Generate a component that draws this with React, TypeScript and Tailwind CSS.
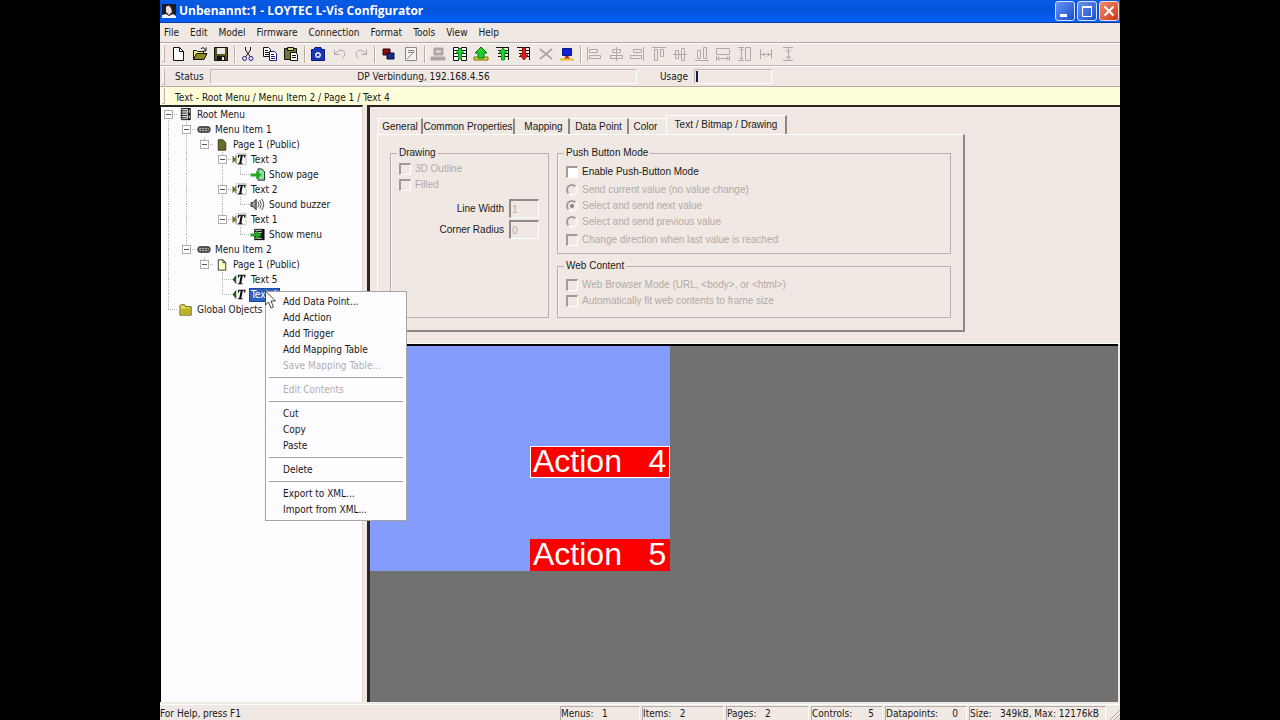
import type { ReactNode } from 'react';
import { clsx } from 'clsx';

type TGuide = 'line' | 'tee' | 'elbow' | 'blank' | 'boxRoot' | 'boxTee' | 'boxElbow';
type TIconName = 'root' | 'menu' | 'pageDark' | 'page' | 'text' | 'textIn' | 'goPage' | 'buzzer' | 'goMenu' | 'folder';
type TTreeRow = { label: string; icon: TIconName; guides: TGuide[]; selected?: boolean };

const treeRows: TTreeRow[] = [
  { label: 'Root Menu', icon: 'root', guides: ['boxRoot'] },
  { label: 'Menu Item 1', icon: 'menu', guides: ['line', 'boxTee'] },
  { label: 'Page 1 (Public)', icon: 'pageDark', guides: ['line', 'line', 'boxElbow'] },
  { label: 'Text 3', icon: 'text', guides: ['line', 'line', 'blank', 'boxTee'] },
  { label: 'Show page', icon: 'goPage', guides: ['line', 'line', 'blank', 'line', 'elbow'] },
  { label: 'Text 2', icon: 'text', guides: ['line', 'line', 'blank', 'boxTee'] },
  { label: 'Sound buzzer', icon: 'buzzer', guides: ['line', 'line', 'blank', 'line', 'elbow'] },
  { label: 'Text 1', icon: 'text', guides: ['line', 'line', 'blank', 'boxElbow'] },
  { label: 'Show menu', icon: 'goMenu', guides: ['line', 'line', 'blank', 'blank', 'elbow'] },
  { label: 'Menu Item 2', icon: 'menu', guides: ['line', 'boxElbow'] },
  { label: 'Page 1 (Public)', icon: 'page', guides: ['line', 'blank', 'boxElbow'] },
  { label: 'Text 5', icon: 'textIn', guides: ['line', 'blank', 'blank', 'tee'] },
  { label: 'Text 4', icon: 'textIn', guides: ['line', 'blank', 'blank', 'elbow'], selected: true },
  { label: 'Global Objects', icon: 'folder', guides: ['elbow'] },
];

const menuItems = ['File', 'Edit', 'Model', 'Firmware', 'Connection', 'Format', 'Tools', 'View', 'Help'];

const contextGroups = [
  [{ label: 'Add Data Point...' }, { label: 'Add Action' }, { label: 'Add Trigger' }, { label: 'Add Mapping Table' }, { label: 'Save Mapping Table...', disabled: true }],
  [{ label: 'Edit Contents', disabled: true }],
  [{ label: 'Cut' }, { label: 'Copy' }, { label: 'Paste' }],
  [{ label: 'Delete' }],
  [{ label: 'Export to XML...' }, { label: 'Import from XML...' }],
];

const Guide = ({ type }: { type: TGuide }) => {
  const up = type !== 'blank' && type !== 'boxRoot';
  const down = type === 'line' || type === 'tee' || type === 'boxTee' || type === 'boxRoot';
  const right = type !== 'blank' && type !== 'line';
  const box = type.startsWith('box');
  return (
    <svg className="h-[15px] w-[18px] shrink-0" viewBox="0 0 18 15" shapeRendering="crispEdges" fill="none" stroke="#b5b2b2" strokeDasharray="1 1">
      {up && <path d="M8.5 0V7" />}
      {down && <path d="M8.5 7V15" />}
      {right && <path d="M8 7.5H18" />}
      {box && (
        <g strokeDasharray="none">
          <rect x="4.5" y="3.5" width="8" height="8" fill="#fff" stroke="#b0adab" />
          <path d="M6 7.5h5" stroke="#555" />
        </g>
      )}
    </svg>
  );
};

const treeIcons: Record<TIconName, ReactNode> = {
  root: (
    <>
      <path d="M3 1h10v13H3z" fill="#111" />
      <path d="M4 2h6v11H4z" fill="#ddd" />
      <path d="M2 4h7M2 6.500h7M2 9h7M2 11.500h7" stroke="#222" />
      <path d="M11 3h1v3h-1zM11 9h1v3h-1z" fill="#eee" />
    </>
  ),
  menu: (
    <>
      <rect x="1.500" y="5" width="13" height="6" rx="2" fill="#555" stroke="#333" />
      <path d="M3 7h10M3 9h10" stroke="#ccc" strokeDasharray="2 1" />
    </>
  ),
  pageDark: <path d="M4 3h5l3 3v8H4z" fill="#6b6a2c" stroke="#33330c" />,
  page: (
    <>
      <path d="M4 3h5l3 3v8H4z" fill="#fdfcc4" stroke="#333" />
      <path d="M9 3v3h3" fill="none" stroke="#333" />
    </>
  ),
  text: (
    <>
      <path d="M4.500 1.500h10v12h-10z" fill="#fff" stroke="#c8c8c8" />
      <path d="M0 4l4 4-4 4z" fill="#6d6a1e" />
      <path d="M3.500 4v8" stroke="#6d6a1e" />
      <path d="M6 3h8l-.5 3h-1l-.2-2h-1.300l-1.600 8h1.300v1H5.800v-1h1.300l1.600-8H7.500L6.600 6h-1z" fill="#111" />
    </>
  ),
  textIn: (
    <>
      <path d="M4 3v10L0 8z" fill="#1d5a1d" />
      <path d="M6 3h8l-.5 3h-1l-.2-2h-1.300l-1.600 8h1.300v1H5.800v-1h1.300l1.600-8H7.500L6.600 6h-1z" fill="#111" />
    </>
  ),
  goPage: (
    <>
      <path d="M8 2h4l3 3v9H8z" fill="#8de08d" stroke="#123" />
      <path d="M0 7h6V4l6 4.500L6 13v-3H0z" fill="#25a825" />
    </>
  ),
  buzzer: (
    <>
      <path d="M.5 6h2L6 2.500v11L2.500 10h-2z" fill="#999" stroke="#222" />
      <path d="M8 5q2 3 0 6M10 3.500q3 4.500 0 9M12 2q4 6 0 12" fill="none" stroke="#444" />
    </>
  ),
  goMenu: (
    <>
      <path d="M4 2h11v12H4z" fill="#111" />
      <path d="M5 3.500h7M5 6h7M5 12h7" stroke="#eee" />
      <path d="M0 7h6V4l6 4.500L6 13v-3H0z" fill="#25a825" />
    </>
  ),
  folder: (
    <>
      <path d="M1.500 4l1-1h4l1 2h6v9h-12z" fill="#e8e04a" stroke="#55551a" />
      <path d="M3 7h10v6H3z" fill="#b8b02a" />
    </>
  ),
};

const Tool = ({ label, disabled, children }: { label: string; disabled?: boolean; children: ReactNode }) => (
  <button type="button" aria-label={label} disabled={disabled} className="h-4 w-4">
    <svg className="h-4 w-4" viewBox="0 0 16 16" fill="none" stroke={disabled ? '#b0a9a6' : '#111'}>
      {children}
    </svg>
  </button>
);

const Separator = () => <div className="mr-1 ml-[5px] h-[17px] w-[2px] shrink-0 border-r border-l border-r-white border-l-[#b5aca8]" />;

const Grip = () => <div className="h-4 w-[3px] shrink-0 border-r border-b border-[#bdb4b0] bg-[#f8f4f1]" />;

const LeftPage = () => (
  <>
    <path d="M1.500 1.500h5v13h-5z" fill="#fff" />
    <path d="M9.500 1.500h5v13h-5z" fill="#fff" />
    <path d="M2 4.500h4M2 7.500h4M2 10.500h4M10 4.500h4M10 7.500h4M10 10.500h4" />
  </>
);

const Toolbar = () => (
  <div className="flex h-[23px] items-center border-b border-[#c0b7b3] pl-[2px] shadow-[inset_0_1px_0_#ffffff]">
    <Grip />
    <div className="ml-[5px] flex w-[59px] justify-between">
      <Tool label="New">
        <path d="M3.500 1.500h6l4 4v9h-10z" fill="#fff" />
        <path d="M9.500 1.500v4h4" />
      </Tool>
      <Tool label="Open">
        <path d="M1.500 13.500v-9h3l1 1h6v2" fill="#f3ee7c" />
        <path d="M1.500 13.500l3-6h10.500l-3 6z" fill="#8c8820" />
        <path d="M9 3q2-3 4.500 1M14 1.500V5h-3" />
      </Tool>
      <Tool label="Save">
        <path d="M1.500 1.500h13v13h-13z" fill="#55551c" />
        <path d="M4 2h8v6H4z" fill="#e8e8e8" stroke="none" />
        <path d="M4 10h8v4H4z" fill="#111" stroke="none" />
        <path d="M9 11h2v3H9z" fill="#eee" stroke="none" />
      </Tool>
    </div>
    <Separator />
    <div className="flex w-[59px] justify-between">
      <Tool label="Cut">
        <path d="M5.500 1v3l5 7M10.500 1v3l-5 7" />
        <circle cx="4.500" cy="12.500" r="2" stroke="#1c1c86" />
        <circle cx="11" cy="12.500" r="2" stroke="#1c1c86" />
      </Tool>
      <Tool label="Copy">
        <path d="M1.500 1.500h5l2 2v7h-7z" fill="#fff" />
        <path d="M3 4.500h3M3 6.500h4M3 8.500h4" />
        <path d="M7.500 5.500h5l2 2v7h-7z" fill="#fff" stroke="#1c1c86" />
        <path d="M9 8.500h3M9 10.500h4M9 12.500h4" stroke="#1c1c86" />
      </Tool>
      <Tool label="Paste">
        <path d="M1.500 2.500h12v11h-12z" fill="#77743a" />
        <path d="M4.500 1.500h6v3h-6z" fill="#d6d080" />
        <path d="M7.500 6.500h5l2 2v6h-7z" fill="#fff" />
        <path d="M9 9.500h4M9 11.500h4" />
      </Tool>
    </div>
    <Separator />
    <div className="flex w-[59px] justify-between">
      <Tool label="Snapshot">
        <path d="M5 1.500h6l1 2h2.500v11h-13v-11H4z" fill="#1636c8" stroke="#0a1a7c" />
        <circle cx="8" cy="9" r="3.500" fill="#fff" stroke="#0a1a7c" />
        <circle cx="8" cy="9" r="1.500" fill="#1636c8" stroke="none" />
      </Tool>
      <Tool label="Undo" disabled>
        <path d="M2.500 3.500v5h5M3 8q4-5 8-3.500q4 3-.5 8" />
      </Tool>
      <Tool label="Redo" disabled>
        <path d="M13.500 3.500v5h-5M13 8Q9 3 5 4.500q-4 3 .5 8" />
      </Tool>
    </div>
    <Separator />
    <div className="flex w-[39px] justify-between">
      <Tool label="Colors">
        <path d="M3 3h7v6H3z" fill="#8a1212" stroke="#330000" />
        <path d="M7 7h7v6H7z" fill="#1a2c8c" stroke="#0b0b33" />
      </Tool>
      <Tool label="Properties" disabled>
        <path d="M2.500 1.500h11v13h-11z" fill="#f6f2f0" stroke="#888" />
        <path d="M5 4.500h6M5 6.500h5M4 13l8-8" stroke="#888" />
      </Tool>
    </div>
    <Separator />
    <div className="flex w-[145px] justify-between">
      <Tool label="Device" disabled>
        <path d="M4 2h9v7H4zM1 11h14v3H1z" fill="#aaa3a0" />
        <path d="M6 4h5v3H6z" fill="#d8d1cd" stroke="none" />
      </Tool>
      <Tool label="Compare">
        <LeftPage />
        <path d="M8 2l4 5h-2.500v6h-3V7H4z" fill="#1fd02f" stroke="#0b9c1a" />
      </Tool>
      <Tool label="Update">
        <path d="M1 11h14v3H1z" fill="#dcd23a" stroke="#77710c" />
        <path d="M8 1l6 6h-3v5H5V7H2z" fill="#1fd02f" stroke="#0b6f14" />
      </Tool>
      <Tool label="Upload">
        <path d="M1 1.500h13M3 4.500h10M3 7.500h10M3 10.500h10M13.500 1v13" />
        <path d="M8 2l4 5H9.500v7h-3V7H4z" fill="#1fd02f" stroke="#0b9c1a" />
      </Tool>
      <Tool label="Download">
        <path d="M1 1.500h13M3 4.500h10M3 7.500h10M3 10.500h10M13.500 1v13" />
        <path d="M6.500 2h3v7H12l-4 5-4-5h2.500z" fill="#e02020" stroke="#a01010" />
      </Tool>
      <Tool label="Abort" disabled>
        <path d="M2 3l12 10M14 3L2 13" strokeWidth="2" />
      </Tool>
      <Tool label="Connect">
        <path d="M3.500 2.500h9v7h-9z" fill="#1020d8" stroke="#0a1590" />
        <path d="M8 10l-2 3M8 10l2 3" stroke="#c02020" strokeWidth="2" />
        <path d="M1 13.500h14" stroke="#e8c020" strokeWidth="2" />
      </Tool>
    </div>
    <Separator />
    <div className="flex w-[210px] justify-between">
      <Tool label="Align left" disabled>
        <path d="M1.500 1v14M3.500 3.500h8v3h-8zM3.500 9.500h11v3h-11z" />
      </Tool>
      <Tool label="Center horizontally" disabled>
        <path d="M8.500 1v14M4.500 3.500h8v3h-8zM2.500 9.500h12v3h-12z" />
      </Tool>
      <Tool label="Align right" disabled>
        <path d="M14.500 1v14M4.500 3.500h8v3h-8zM1.500 9.500h11v3h-11z" />
      </Tool>
      <Tool label="Align top" disabled>
        <path d="M1 1.500h14M3.500 3.500h3v11h-3zM9.500 3.500h3v7h-3z" />
      </Tool>
      <Tool label="Center vertically" disabled>
        <path d="M1 8.500h14M3.500 4.500h3v8h-3zM9.500 2.500h3v12h-3z" />
      </Tool>
      <Tool label="Align bottom" disabled>
        <path d="M1 14.500h14M3.500 4.500h3v8h-3zM9.500 1.500h3v11h-3z" />
      </Tool>
      <Tool label="Same width" disabled>
        <path d="M1.500 2.500h13v6h-13zM1.500 10v5M14.500 10v5M2 12.500h12M4.500 10.500l-2 2 2 2M11.500 10.500l2 2-2 2" />
      </Tool>
      <Tool label="Same height" disabled>
        <path d="M8.500 1.500h5v13h-5zM1 1.500h6M1 14.500h6M4.500 2v12M2.500 4.500l2-2 2 2M2.500 11.500l2 2 2-2" />
      </Tool>
      <Tool label="Space across" disabled>
        <path d="M2.500 3v10M13.500 3v10M3 8.500h10M6.500 6.500l-2 2 2 2M9.500 6.500l2 2-2 2" />
      </Tool>
      <Tool label="Space down" disabled>
        <path d="M3 1.500h10M3 14.500h10M8.500 2v12M5.500 3.500l3 3 3-3M5.500 12.500l3-3 3 3" />
      </Tool>
    </div>
  </div>
);

type TCheckProps = { label: string; enabled?: boolean; className?: string };

const Check = ({ label, enabled, className }: TCheckProps) => (
  <label className={clsx('flex h-4 items-center gap-1', enabled ? 'text-[#1a1818]' : 'text-[#b3aaa7]', className)}>
    <input
      type="checkbox"
      disabled={!enabled}
      className={clsx('h-3 w-3 appearance-none border-t-2 border-r border-b border-l-2 border-t-[#a19a97] border-r-white border-b-white border-l-[#a19a97]', enabled ? 'bg-white' : 'bg-[#f0e8e3]')}
    />
    {label}
  </label>
);

const RadioItem = ({ label, checked }: { label: string; checked?: boolean }) => (
  <label className="flex h-4 items-center gap-1 text-[#b3aaa7]">
    <input
      type="radio"
      name="send-mode"
      disabled
      defaultChecked={checked}
      className="h-3 w-3 appearance-none rounded-full border-2 border-t-[#a19a97] border-r-[#faf7f5] border-b-[#faf7f5] border-l-[#a19a97] checked:bg-[radial-gradient(#8f8886_30%,transparent_40%)]"
    />
    {label}
  </label>
);

const NumberField = ({ id, label, value }: { id: string; label: string; value: string }) => (
  <div className="flex items-center justify-end gap-[5px]">
    <label htmlFor={id}>{label}</label>
    <input
      id={id}
      disabled
      defaultValue={value}
      className="h-[19px] w-[30px] border-t-2 border-r border-b border-l-2 border-t-[#918a87] border-r-white border-b-white border-l-[#918a87] bg-[#f0e8e3] pl-[1px] text-[#b3aaa7]"
    />
  </div>
);

const fieldsetClass = 'border border-[#b9b0ad] px-2 shadow-[inset_1px_0_0_#f8f4f2]';
const legendClass = '-ml-[2px] px-[2px] leading-3';
const tabClass = 'h-4 border-t border-r-2 border-t-white border-r-[#8d8785] whitespace-nowrap';

const PropertyForm = () => (
  <div className="flex h-[237px] flex-col border-b border-white pt-2 pl-[7px] font-['Liberation_Sans',Arial,sans-serif] text-[10px] leading-3">
    <div role="tablist" className="flex items-end pl-[1px]">
      <button role="tab" type="button" className={clsx(tabClass, 'w-[45px] border-l border-l-white')}>General</button>
      <button role="tab" type="button" className={clsx(tabClass, 'w-[92px]')}>Common Properties</button>
      <button role="tab" type="button" className={clsx(tabClass, 'w-[55px] pl-1')}>Mapping</button>
      <button role="tab" type="button" className={clsx(tabClass, 'w-[59px]')}>Data Point</button>
      <button role="tab" type="button" className="h-4 w-[37px] border-t border-white pr-1">Color</button>
      <button role="tab" type="button" aria-selected className="h-[19px] w-[121px] border-t border-r-2 border-l border-t-white border-r-[#8d8785] border-l-white">
        Text / Bitmap / Drawing
      </button>
    </div>
    <div role="tabpanel" className="flex h-[198px] w-[588px] gap-2 border-t border-r-2 border-b-2 border-l border-t-white border-r-[#8d8785] border-b-[#8d8785] border-l-white p-3">
      <fieldset className={clsx(fieldsetClass, 'w-[159px]')}>
        <legend className={legendClass}>Drawing</legend>
        <Check label="3D Outline" className="mt-[2px]" />
        <Check label="Filled" />
        <div className="mt-[6px] flex flex-col gap-[2px] pr-[1px]">
          <NumberField id="line-width" label="Line Width" value="1" />
          <NumberField id="corner-radius" label="Corner Radius" value="0" />
        </div>
      </fieldset>
      <div className="flex flex-1 flex-col gap-[6px]">
        <fieldset className={clsx(fieldsetClass, 'h-[107px]')}>
          <legend className={legendClass}>Push Button Mode</legend>
          <Check label="Enable Push-Button Mode" enabled className="mt-[5px]" />
          <div className="my-[2px]">
            <RadioItem label="Send current value (no value change)" />
            <RadioItem label="Select and send next value" checked />
            <RadioItem label="Select and send previous value" />
          </div>
          <Check label="Change direction when last value is reached" />
        </fieldset>
        <fieldset className={clsx(fieldsetClass, 'flex-1')}>
          <legend className={legendClass}>Web Content</legend>
          <Check label="Web Browser Mode (URL, <body>, or <html>)" className="mt-[5px]" />
          <Check label="Automatically fit web contents to frame size" />
        </fieldset>
      </div>
    </div>
  </div>
);

const CanvasAction = ({ label, selected }: { label: string; selected?: boolean }) => (
  <div className={clsx('h-8 w-[140px] border bg-[#fb0000] pl-[2px] leading-7 whitespace-pre text-white', selected ? 'border-white' : 'border-[#fb0000]')}>{label}</div>
);

const ContextMenu = () => (
  <div role="menu" className="absolute top-[291px] left-[105px] w-[142px] border border-[#a8a3a4] bg-[#fdfcfe] px-[3px] py-[2px]">
    {contextGroups.map((group, idx) => (
      <div key={group[0].label}>
        {idx > 0 && <hr className="mt-[3px] mb-1 border-[#a8a3a4]" />}
        {group.map((item) => (
          <button key={item.label} type="button" role="menuitem" className={clsx('block h-4 w-full pl-[14px] text-left leading-4', 'disabled' in item && 'text-[#b3aeae]')}>
            {item.label}
          </button>
        ))}
      </div>
    ))}
    <svg className="absolute -top-[2px] -left-[2px] h-[20px] w-[13px]" viewBox="0 0 13 20" fill="#fff" stroke="#444">
      <path d="M1.500 1v14l3-3 2.500 6 2.500-1-2.500-6h4.500z" />
    </svg>
  </div>
);

const StatusCell = ({ label, value, className }: { label: string; value: string; className: string }) => (
  <div className={clsx('flex h-[14px] items-end border-t border-r border-l border-t-[#b5aca8] border-r-white border-l-[#b5aca8] whitespace-pre', className)}>
    <span>{label}</span>
    <span>{value}</span>
  </div>
);

const App = () => (
  <div className="h-screen overflow-hidden bg-black">
    <div className="relative mx-auto flex h-full w-3/4 flex-col bg-[#f0e8e3] font-['DejaVu_Sans_Condensed','DejaVu_Sans',sans-serif] text-[10px] leading-3 text-[#1a1818]">
      <header className="flex h-[23px] items-center border-b border-[#0a3c9c] bg-linear-to-b from-[#0a5be4] via-[#0553dd] to-[#0262fb] pr-[1px] pl-[2px]">
        <svg className="h-[14px] w-[14px]" viewBox="0 0 14 14">
          <path d="M0 0h14v14H0z" fill="#191a2a" />
          <path d="M4 3q3-3 5 1l1 4-3 3-3-3z" fill="#f0dcd0" />
          <path d="M0 14v-3l4-1 3 2 4-2 3 2v2z" fill="#f5f2f2" />
        </svg>
        <h1 className="ml-[3px] flex-1 font-['Open_Sans','Noto_Sans',sans-serif] text-xs leading-4 font-bold text-white">Unbenannt:1 - LOYTEC L-Vis Configurator</h1>
        <div className="flex gap-[2px]">
          <button type="button" aria-label="Minimize" className="h-5 w-5 rounded-[3px] border border-[#d5e2fa] bg-linear-to-br from-[#6a93f0] to-[#1c4bd0]">
            <svg viewBox="0 0 18 18" fill="#fff"><path d="M4 12h7v3H4z" /></svg>
          </button>
          <button type="button" aria-label="Maximize" className="h-5 w-5 rounded-[3px] border border-[#d5e2fa] bg-linear-to-br from-[#6a93f0] to-[#1c4bd0]">
            <svg viewBox="0 0 18 18" fill="none" stroke="#fff"><path d="M4.500 4.500h9v10h-9z" /><path d="M4 5h10" strokeWidth="2" /></svg>
          </button>
          <button type="button" aria-label="Close" className="h-5 w-5 rounded-[3px] border border-[#f5d8d0] bg-linear-to-br from-[#ee8a6c] to-[#cb3612]">
            <svg viewBox="0 0 18 18" stroke="#fff" strokeWidth="2"><path d="M4.500 4.500l9 9M13.500 4.500l-9 9" /></svg>
          </button>
        </div>
      </header>

      <nav className="flex h-5 items-center gap-[11px] border-b border-[#b0a7a3] pl-1">
        {menuItems.map((item) => (
          <button key={item} type="button">{item}</button>
        ))}
      </nav>

      <Toolbar />

      <div className="flex h-[21px] items-center border-b border-[#b8afab] pt-[1px] pl-[2px] shadow-[inset_0_1px_0_#ffffff]">
        <Grip />
        <span className="w-[45px] pl-[10px]">Status</span>
        <div className="h-[15px] w-[427px] border border-t-[#c3bab6] border-r-white border-b-white border-l-[#c3bab6] text-center leading-[14px]">DP Verbindung, 192.168.4.56</div>
        <span className="ml-[23px] w-[34px]">Usage</span>
        <div className="h-[15px] w-[78px] border border-t-[#c3bab6] border-r-white border-b-white border-l-[#c3bab6] py-[1px] pl-[1px]">
          <div className="h-full w-[2px] bg-[#1a1a4a]" />
        </div>
      </div>

      <div className="flex h-[18px] items-center bg-[#fffedb] pl-[2px]">
        <Grip />
        <span className="pt-[3px] pl-[10px]">Text - Root Menu / Menu Item 2 / Page 1 / Text 4</span>
      </div>

      <div className="flex min-h-0 flex-1">
        <aside className="w-[203px] shrink-0 border-t-2 border-r border-l border-t-[#2a2626] border-r-[#e0dad6] border-l-black bg-[#fdfcfe]">
          <ul className="-ml-[1px]">
            {treeRows.map((row, idx) => (
              <li key={idx} className="flex h-[15px] items-center">
                {row.guides.map((type, i) => (
                  <Guide key={i} type={type} />
                ))}
                <svg className="h-[15px] w-4 shrink-0" viewBox="0 0 16 16">{treeIcons[row.icon]}</svg>
                <span className={clsx('ml-[1px] px-[2px] leading-[14px] whitespace-nowrap', row.selected && 'bg-[#2f62bd] text-white outline-1 -outline-offset-1 outline-dotted outline-[#1c2c55]')}>{row.label}</span>
              </li>
            ))}
          </ul>
        </aside>
        <main className="ml-1 flex min-w-0 flex-1 flex-col border-t-2 border-l-[3px] border-t-[#2a2626] border-l-[#2a2626]">
          <PropertyForm />
          <div className="mr-[2px] flex min-h-0 flex-1 flex-col border-t-2 border-black bg-[#717171]">
            <div className="flex h-[225px] w-[300px] flex-col items-end justify-end gap-[61px] bg-[#849dfd] font-['Liberation_Sans',Arial,sans-serif] text-[32px]">
              <CanvasAction label="Action   4" selected />
              <CanvasAction label="Action   5" />
            </div>
          </div>
        </main>
      </div>

      <footer className="mt-[2px] flex h-4 shrink-0 items-end border-t border-white">
        <span className="flex-1">For Help, press F1</span>
        <div className="flex gap-[2px]">
          <StatusCell label="Menus:   " value="1" className="w-[80px]" />
          <StatusCell label="Items:   " value="2" className="w-[82px]" />
          <StatusCell label="Pages:   " value="2" className="w-[83px]" />
          <StatusCell label="Controls:" value="5" className="w-[72px] justify-between pr-2" />
          <StatusCell label="Datapoints:" value="0" className="w-[82px] justify-between pr-2" />
          <StatusCell label="Size:   " value="349kB, Max: 12176kB" className="w-[137px]" />
        </div>
        <svg className="h-[14px] w-[14px]" viewBox="0 0 14 14" stroke="#b0a7a3">
          <path d="M4 14L14 4M8 14l6-6M12 14l2-2" />
        </svg>
      </footer>

      <ContextMenu />
    </div>
  </div>
);

export default App;
